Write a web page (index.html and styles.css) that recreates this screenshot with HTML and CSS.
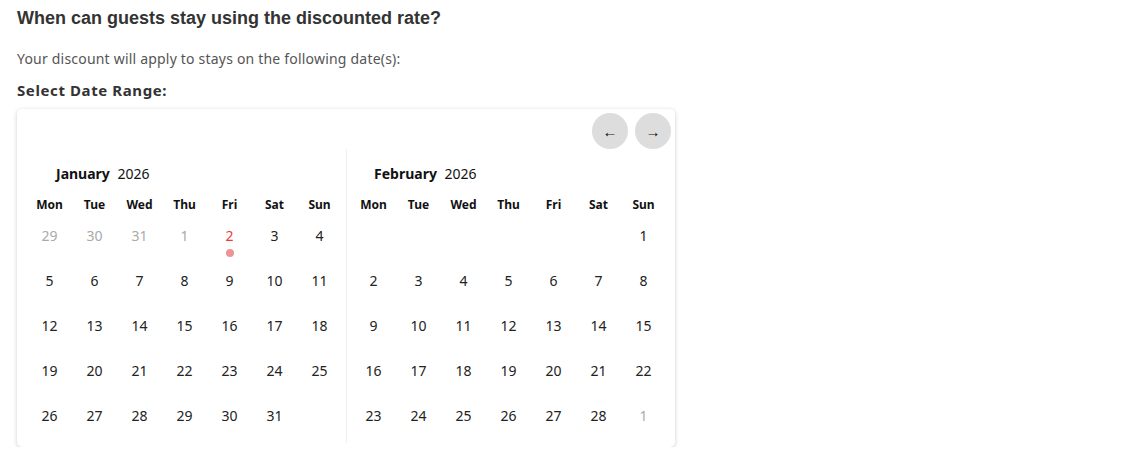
FILE: index.html
```html
<!DOCTYPE html>
<html lang="en">
<head>
    <meta charset="UTF-8">
    <title>Discount dates</title>
    <link rel="stylesheet" href="styles.css">
</head>
<body>
    <h1>When can guests stay using the discounted rate?</h1>
    <p class="intro">Your discount will apply to stays on the following date(s):</p>
    <h2>Select Date Range:</h2>

    <div class="calendar">
        <div class="nav">
            <button class="nav-button">&larr;</button>
            <button class="nav-button">&rarr;</button>
        </div>

        <div class="months">
            <!-- January -->
            <div class="month month-first">
                <div class="month-title"><b>January</b> 2026</div>
                <div class="grid">
                    <span class="dow">Mon</span><span class="dow">Tue</span><span class="dow">Wed</span><span class="dow">Thu</span><span class="dow">Fri</span><span class="dow">Sat</span><span class="dow">Sun</span>
                    <span class="day muted">29</span><span class="day muted">30</span><span class="day muted">31</span><span class="day muted">1</span><span class="day today">2</span><span class="day">3</span><span class="day">4</span>
                    <span class="day">5</span><span class="day">6</span><span class="day">7</span><span class="day">8</span><span class="day">9</span><span class="day">10</span><span class="day">11</span>
                    <span class="day">12</span><span class="day">13</span><span class="day">14</span><span class="day">15</span><span class="day">16</span><span class="day">17</span><span class="day">18</span>
                    <span class="day">19</span><span class="day">20</span><span class="day">21</span><span class="day">22</span><span class="day">23</span><span class="day">24</span><span class="day">25</span>
                    <span class="day">26</span><span class="day">27</span><span class="day">28</span><span class="day">29</span><span class="day">30</span><span class="day">31</span><span class="day"></span>
                </div>
            </div>

            <!-- February -->
            <div class="month month-second">
                <div class="month-title"><b>February</b> 2026</div>
                <div class="grid">
                    <span class="dow">Mon</span><span class="dow">Tue</span><span class="dow">Wed</span><span class="dow">Thu</span><span class="dow">Fri</span><span class="dow">Sat</span><span class="dow">Sun</span>
                    <span class="day"></span><span class="day"></span><span class="day"></span><span class="day"></span><span class="day"></span><span class="day"></span><span class="day">1</span>
                    <span class="day">2</span><span class="day">3</span><span class="day">4</span><span class="day">5</span><span class="day">6</span><span class="day">7</span><span class="day">8</span>
                    <span class="day">9</span><span class="day">10</span><span class="day">11</span><span class="day">12</span><span class="day">13</span><span class="day">14</span><span class="day">15</span>
                    <span class="day">16</span><span class="day">17</span><span class="day">18</span><span class="day">19</span><span class="day">20</span><span class="day">21</span><span class="day">22</span>
                    <span class="day">23</span><span class="day">24</span><span class="day">25</span><span class="day">26</span><span class="day">27</span><span class="day">28</span><span class="day muted">1</span>
                </div>
            </div>
        </div>
    </div>
</body>
</html>
```

FILE: styles.css
```css
body {
    background-color: #fff;
    color: #222;
    font-family: "Liberation Sans", Arial, sans-serif;
    margin: 0;
    padding: 0 17px;
}

h1 {
    font-size: 18px;
    line-height: 20px;
    margin: 8px 0 0;
    color: #333;
}

.intro {
    font-family: "Noto Sans", sans-serif;
    font-size: 14px;
    letter-spacing: 0.2px;
    line-height: 18px;
    color: #555;
    margin: 22px 0 0;
}

h2 {
    font-family: "Noto Sans", sans-serif;
    font-size: 15px;
    letter-spacing: 0.6px;
    line-height: 20px;
    color: #333;
    margin: 12px 0 0;
}

/* Calendar card */
.calendar {
    width: 658px;
    margin-top: 9px;
    background-color: #fff;
    border-radius: 5px;
    box-shadow: 0 1px 4px rgba(0, 0, 0, 0.2);
    padding: 4px 4px 4px 0;
    box-sizing: border-box;
    font-family: "Noto Sans", sans-serif;
}

.nav {
    display: flex;
    justify-content: flex-end;
    gap: 7px;
}

.nav-button {
    width: 36px;
    height: 36px;
    border: none;
    border-radius: 50%;
    background-color: #ddd;
    color: #111;
    font-size: 15px;
    padding: 0;
    cursor: pointer;
}

.months {
    display: flex;
}

.month {
    padding-bottom: 5px;
}

.month-first {
    padding-left: 10px;
    padding-right: 4px;
}

.month-second {
    border-left: 1px solid #eee;
    padding-left: 4px;
}

.month-title {
    font-size: 14px;
    line-height: 18px;
    padding-top: 16px;
    margin-bottom: 12px;
    color: #111;
}

.month-first .month-title {
    padding-left: 29px;
}

.month-second .month-title {
    padding-left: 23px;
}

.month-title b {
    margin-right: 4px;
}

.grid {
    display: grid;
    grid-template-columns: repeat(7, 45px);
    grid-template-rows: 18px repeat(5, 45px);
}

.grid .dow {
    line-height: 20px;
    text-align: center;
    font-size: 12px;
    font-weight: bold;
    color: #111;
}

.day {
    position: relative;
    text-align: center;
    font-size: 14px;
    line-height: 45px;
    color: #222;
}

.day.muted {
    color: #aaa;
}

.day.today {
    color: #f03a3a;
}

.day.today::after {
    content: "";
    position: absolute;
    left: 19px;
    top: 36px;
    width: 8px;
    height: 8px;
    border-radius: 50%;
    background-color: #ee9494;
}
```
